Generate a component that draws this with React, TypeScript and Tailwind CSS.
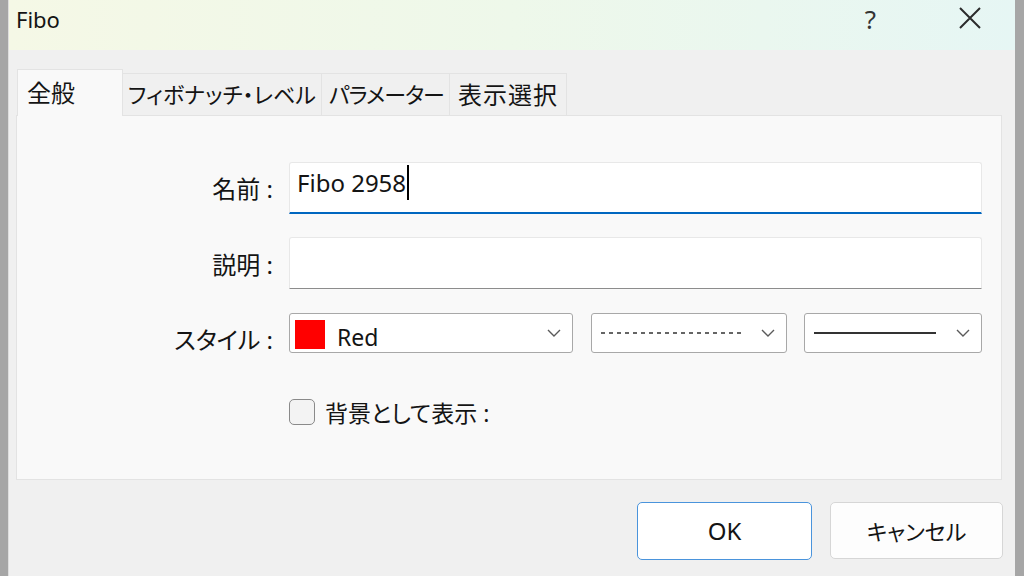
import React from "react";

const font = { fontFamily: '"Noto Sans", "Noto Sans CJK JP", sans-serif' };

function Chevron({ className = "" }: { className?: string }) {
  return (
    <svg width="14" height="8" viewBox="0 0 14 8" className={className}>
      <polyline points="1,1 7,7 13,1" fill="none" stroke="#5a5a5a" strokeWidth="1.4" />
    </svg>
  );
}

export default function App() {
  return (
    <div
      className="w-[1024px] h-[576px] flex bg-[#f0f0f0] text-[#141414] overflow-hidden [font-feature-settings:'palt']"
      style={font}
    >
      <div className="w-[8px] bg-[#a6a6a6] shrink-0" />
      <div className="w-[1px] bg-[#dedede] shrink-0" />
      <div className="flex-1 flex flex-col">
        {/* title bar */}
        <div className="h-[50px] flex items-start pt-[4px] pl-[7px] bg-gradient-to-r from-[#f5f8e6] via-[#eef8ea] to-[#e6f6f4]">
          <span className="text-[22px] leading-[30px]">Fibo</span>
          <div className="flex-1" />
          <span className="text-[26px] leading-[30px] text-[#333] mr-[82px]">?</span>
          <svg width="24" height="24" viewBox="0 0 24 24" className="mr-[33px] mt-[2px]">
            <path d="M2 2 L22 22 M22 2 L2 22" stroke="#2b2b2b" strokeWidth="2" />
          </svg>
        </div>

        {/* body */}
        <div className="flex-1 flex flex-col pl-[7px] pr-[13px] pt-[19px]">
          {/* tabs */}
          <div className="flex items-end h-[46px] pl-[1px]">
            <div className="w-[106px] h-[47px] bg-[#f9f9f9] border border-b-0 border-[#e3e3e3] pl-[9px] flex items-center text-[24px] relative z-10 mb-[-1px]">
              全般
            </div>
            <div className="w-[199px] h-[42px] bg-[#f0f0f0] border border-l-0 border-b-0 border-[#e3e3e3] pl-[5px] flex items-center text-[22px] whitespace-nowrap">
              フィボナッチ・レベル
            </div>
            <div className="w-[128px] h-[42px] bg-[#f0f0f0] border border-l-0 border-b-0 border-[#e3e3e3] pl-[7px] flex items-center text-[22px] tracking-[-1px] whitespace-nowrap">
              パラメーター
            </div>
            <div className="w-[117px] h-[42px] bg-[#f0f0f0] border border-l-0 border-b-0 border-[#e3e3e3] pl-[8px] flex items-center text-[24px] tracking-[1px] whitespace-nowrap">
              表示選択
            </div>
          </div>

          {/* panel */}
          <div className="w-[986px] h-[365px] bg-[#f9f9f9] border border-[#e3e3e3] pt-[46px] pr-[19px] flex flex-col">
            {/* name */}
            <div className="flex items-center h-[52px]">
              <div className="w-[256px] text-right text-[24px] pt-[1px]">名前 :</div>
              <div className="ml-[16px] flex-1 h-[52px] bg-white border border-[#e8e8e8] border-b-2 border-b-[#0067c0] rounded-t-[3px] flex items-start pl-[7px]">
                <span className="text-[24px] leading-[30px] mt-[5px]">Fibo 2958</span>
                <span className="inline-block w-[1.5px] h-[35px] bg-black ml-[1px] mt-[2px]" />
              </div>
            </div>
            {/* desc */}
            <div className="flex items-center h-[52px] mt-[23px]">
              <div className="w-[256px] text-right text-[24px] pt-[3px]">説明 :</div>
              <div className="ml-[16px] flex-1 h-[52px] bg-white border border-[#e8e8e8] border-b-[#8c8c8c] rounded-t-[3px]" />
            </div>
            {/* style */}
            <div className="flex items-center h-[40px] mt-[24px]">
              <div className="w-[256px] text-right text-[24px] pt-[14px]">スタイル :</div>
              <div className="ml-[16px] w-[284px] h-[40px] bg-white border border-[#a8a8a8] rounded-[3px] flex items-center pl-[5px] pr-[11px]">
                <div className="w-[30px] h-[29px] bg-[#ff0000] mt-[3px]" />
                <span className="ml-[12px] text-[23px] leading-none pt-[9px]">Red</span>
                <div className="flex-1" />
                <Chevron />
              </div>
              <div className="ml-[18px] w-[196px] h-[40px] bg-white border border-[#a8a8a8] rounded-[3px] flex items-center pl-[9px] pr-[11px]">
                <svg width="142" height="4" viewBox="0 0 142 4">
                  <line x1="0" y1="2" x2="142" y2="2" stroke="#333" strokeWidth="1.6" strokeDasharray="4 4" />
                </svg>
                <div className="flex-1" />
                <Chevron />
              </div>
              <div className="ml-[17px] w-[178px] h-[40px] bg-white border border-[#a8a8a8] rounded-[3px] flex items-center pl-[9px] pr-[11px]">
                <svg width="122" height="4" viewBox="0 0 122 4">
                  <line x1="0" y1="2" x2="122" y2="2" stroke="#333" strokeWidth="2" />
                </svg>
                <div className="flex-1" />
                <Chevron />
              </div>
            </div>
            {/* checkbox */}
            <div className="flex items-center mt-[46px] pl-[272px]">
              <div className="w-[26px] h-[26px] rounded-[5px] border-[1.5px] border-[#8a8a8a] bg-[#f3f3f3]" />
              <span className="ml-[10px] text-[23px] leading-none pt-[3px]">背景として表示 :</span>
            </div>
          </div>

          {/* buttons */}
          <div className="flex justify-end mt-[22px] mr-[-1px]">
            <button className="w-[175px] h-[58px] bg-white border border-[#4a94dc] rounded-[5px] text-[24px] leading-none">
              OK
            </button>
            <button className="ml-[18px] w-[173px] h-[57px] bg-[#fdfdfd] border border-[#d6d6d6] rounded-[5px] text-[22px] leading-none">
              キャンセル
            </button>
          </div>
        </div>
      </div>
      <div className="w-[9px] bg-[#a6a6a6] shrink-0" />
    </div>
  );
}
